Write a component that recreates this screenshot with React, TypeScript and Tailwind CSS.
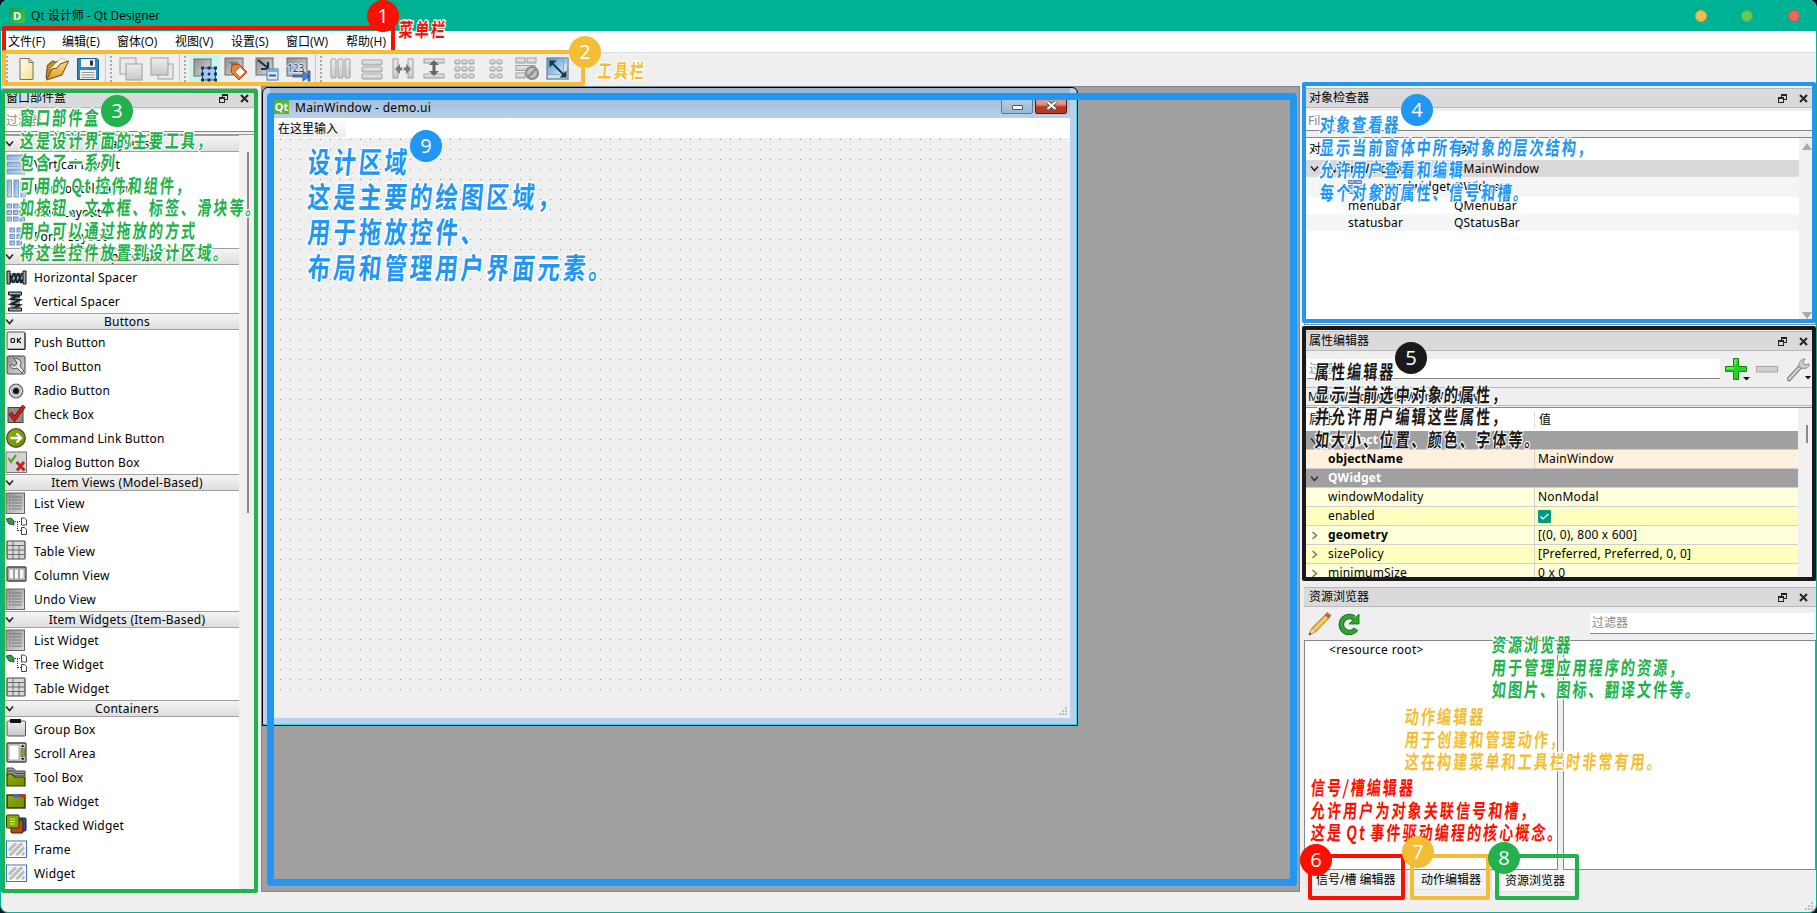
import React from "react";

const UI = "font-['Noto_Sans','Noto_Sans_CJK_SC',sans-serif]";

/* ---------- shared icons ---------- */

function Restore() {
  return (
    <svg width="9" height="9" viewBox="0 0 9 9" fill="none" stroke="#222" shapeRendering="crispEdges">
      <path d="M3 2.5V.5H8.5V5.5H6" strokeWidth="1" />
      <path d="M3 1H9" strokeWidth="1.5" />
      <rect x="0.5" y="3.5" width="5" height="5" />
      <path d="M0 4H6" strokeWidth="1.5" />
    </svg>
  );
}

function Cross() {
  return (
    <svg width="9" height="9" viewBox="0 0 9 9" stroke="#222" strokeWidth="2">
      <path d="M1 1L8 8M8 1L1 8" />
    </svg>
  );
}

function Chevron({ right = false, color = "#222" }: { right?: boolean; color?: string }) {
  return (
    <svg width="9" height="9" viewBox="0 0 9 9" fill="none" stroke={color} strokeWidth="1.5">
      <path d={right ? "M2.5 1L6.5 4.5L2.5 8" : "M1 2.5L4.5 6.5L8 2.5"} />
    </svg>
  );
}

function Grip() {
  return (
    <svg width="8" height="8" viewBox="0 0 8 8" fill="#bdbdbd" shapeRendering="crispEdges">
      <path d="M6 0h2v2h-2zM3 3h2v2h-2zM6 3h2v2h-2zM0 6h2v2h-2zM3 6h2v2h-2zM6 6h2v2h-2z" />
    </svg>
  );
}

/* ---------- toolbar icons ---------- */

function Defs() {
  return (
    <svg width="0" height="0" className="absolute">
      <defs>
        <linearGradient id="gDark" x1="0" y1="0" x2="1" y2="1">
          <stop offset="0" stopColor="#8e8e8e" />
          <stop offset="1" stopColor="#dcdcdc" />
        </linearGradient>
        <linearGradient id="gPale" x1="0" y1="0" x2="0" y2="1">
          <stop offset="0" stopColor="#ededed" />
          <stop offset="1" stopColor="#c9c9c9" />
        </linearGradient>
        <linearGradient id="gBlue" x1="0" y1="0" x2="1" y2="1">
          <stop offset="0" stopColor="#4d94c9" />
          <stop offset="1" stopColor="#d3e8f8" />
        </linearGradient>
        <linearGradient id="gPage" x1="0" y1="0" x2="1" y2="1">
          <stop offset="0" stopColor="#fffef0" />
          <stop offset="1" stopColor="#f8e08a" />
        </linearGradient>
        <linearGradient id="gFolder" x1="0" y1="0" x2="0" y2="1">
          <stop offset="0" stopColor="#fbe08a" />
          <stop offset="1" stopColor="#dc9a1c" />
        </linearGradient>
        <linearGradient id="gGreen" x1="0" y1="0" x2="1" y2="1">
          <stop offset="0" stopColor="#8fae10" />
          <stop offset="1" stopColor="#6f8b00" />
        </linearGradient>
        <linearGradient id="gLayout" x1="0" y1="0" x2="1" y2="1">
          <stop offset="0" stopColor="#6fa3dc" />
          <stop offset="1" stopColor="#d6e6f6" />
        </linearGradient>
      </defs>
    </svg>
  );
}

function T({ children, active = false }: { children: React.ReactNode; active?: boolean }) {
  return (
    <div className={`flex h-[28px] w-[31px] items-center justify-center ${active ? "bg-[#c6f7ee]" : ""}`}>
      <svg width="24" height="24" viewBox="0 0 24 24" className="overflow-visible">
        {children}
      </svg>
    </div>
  );
}

function ToolSep() {
  return (
    <div className="flex h-[30px] w-[12px] items-center gap-[4px] pl-[2px]">
      <div className="h-[30px] w-px bg-[#c9c9c9]" />
      <div className="h-[26px] w-[2px] bg-[repeating-linear-gradient(#a9a9a9_0_2px,transparent_2px_4px)]" />
    </div>
  );
}

const graySq = { fill: "url(#gDark)", stroke: "#6d6d6d" };
const pale = { fill: "url(#gPale)", stroke: "#9f9f9f", strokeWidth: 1 };

function Toolbar() {
  return (
    <div className="flex h-[33px] shrink-0 items-center bg-[#efefef] pb-[2px] pl-[5px]">
      <div className="mr-[2px] h-[26px] w-[2px] bg-[repeating-linear-gradient(#a9a9a9_0_2px,transparent_2px_4px)]" />
      <T>
        <path d="M6 1.5h9l4 4v17H6z" fill="url(#gPage)" stroke="#77735c" />
        <path d="M15 1.5v4h4z" fill="#fff" stroke="#77735c" />
      </T>
      <T>
        <path d="M1 21L2.500 8l5-4 3 1 3-1 4 3v4L9 20z" fill="#c58a19" stroke="#6b4a12" />
        <path d="M5 12L16 1l6 3-9 12z" fill="#fffbe8" stroke="#b9a060" strokeWidth=".6" />
        <path d="M1.500 23L7 12l5-1 3-4 8.500-3L17 18z" fill="url(#gFolder)" stroke="#6b4a12" />
      </T>
      <T>
        <path d="M1.500 1.500H21l1.500 1.500V22.500H1.500z" fill="#2f86c6" stroke="#1a5f94" />
        <path d="M5 2h14v8H5z" fill="#f3f3f3" />
        <path d="M14 3.500h3v5h-3z" fill="#333" />
        <path d="M4 13h16v9H4z" fill="#eee" />
        <path d="M5.500 15.500h13M5.500 18h13M5.500 20.500h13" stroke="#999" />
      </T>
      <ToolSep />
      <T>
        <rect x="1" y="1" width="16" height="16" {...pale} fill="#e9e9e9" />
        <rect x="7" y="7" width="16" height="16" {...pale} />
      </T>
      <T>
        <rect x="8" y="7" width="15" height="15" {...pale} fill="#e9e9e9" />
        <rect x="1" y="1" width="17" height="17" {...pale} />
      </T>
      <ToolSep />
      <T active>
        <rect x="1" y="2" width="17" height="17" {...graySq} />
        <rect x="9.500" y="11" width="13" height="12" fill="#a9cbf3" stroke="#2b4f86" />
        <path d="M8 9.500h3v3H8zM14.500 9.500h3v3h-3zM21 9.500h3v3h-3zM8 15.500h3v3H8zM21 15.500h3v3h-3zM8 21.500h3v3H8zM14.500 21.500h3v3h-3zM21 21.500h3v3h-3z" fill="#16345f" />
        <circle cx="16" cy="17" r="1.500" fill="#16345f" />
      </T>
      <T>
        <rect x="1" y="1" width="18" height="17" {...graySq} />
        <path d="M5 5h8l2 3-3 5z" fill="#444" opacity=".5" />
        <path d="M8 8l7-1 8 8-8 8-8-8z" fill="#ef7d32" stroke="#a84408" />
        <path d="M11 15l5-5 5 5-5 5z" fill="#fff" stroke="#a84408" strokeWidth=".5" />
      </T>
      <T>
        <rect x="1" y="1" width="17" height="17" {...graySq} />
        <path d="M3 3l10 8M13 5v7H6" stroke="#1d3540" strokeWidth="2.200" fill="none" />
        <rect x="12" y="12" width="11" height="11" fill="#dbe9fb" stroke="#3f72b5" />
        <path d="M12 12h11v3H12z" fill="#7facdf" />
        <path d="M14 18.500h7" stroke="#2a5ea6" strokeWidth="2" />
      </T>
      <T>
        <rect x="1" y="1" width="20" height="18" {...graySq} />
        <text x="1" y="15" fontSize="10" fill="#1b3f80" className="font-['Noto_Sans',sans-serif]" stroke="#eee" strokeWidth="1.500" style={{ paintOrder: "stroke" }}>
          123
        </text>
        <path d="M7 18h10v-4l6 5.500-6 4.500v-4H7zM22 14h2v10h-2z" fill="#4d84d1" stroke="#1d4688" strokeWidth=".7" />
      </T>
      <ToolSep />
      <T>
        {[2, 9, 16].map((x) => (
          <rect key={x} x={x} y="2" width="5" height="19" rx="1" {...pale} />
        ))}
      </T>
      <T>
        {[3, 10, 17].map((y) => (
          <rect key={y} x="2" y={y} width="20" height="5" rx="1" {...pale} />
        ))}
      </T>
      <T>
        <rect x="2" y="2" width="5" height="19" {...pale} />
        <rect x="17" y="2" width="5" height="19" {...pale} />
        <path d="M4 12l5-5v3.500h6V7l5 5-5 5v-3.500H9V17z" fill="#777" />
        <path d="M12 5v14" stroke="#eee" strokeWidth="1.500" />
      </T>
      <T>
        <rect x="2" y="2" width="20" height="4" {...pale} />
        <rect x="2" y="17" width="20" height="4" {...pale} />
        <path d="M12 3l5 5h-3.500v6H17l-5 5-5-5h3.500V8H7z" fill="#666" />
      </T>
      <T>
        {[3, 10, 17].map((y) => [2, 9, 16].map((x) => <rect key={`${x}${y}`} x={x} y={y} width="5" height="4" rx="1" {...pale} />))}
      </T>
      <T>
        {[3, 10, 17].map((y) => [6, 13].map((x) => <rect key={`${x}${y}`} x={x} y={y} width="5" height="4" rx="1" {...pale} />))}
      </T>
      <T>
        <rect x="1" y="1" width="9" height="5" {...pale} />
        <rect x="12" y="1" width="9" height="5" {...pale} />
        <rect x="1" y="8.500" width="19" height="5" {...pale} />
        <rect x="1" y="16" width="9" height="5" {...pale} />
        <circle cx="17" cy="16" r="6" fill="#c0c0c0" stroke="#8b8b8b" strokeWidth="2" />
        <path d="M13 20l8-8" stroke="#8b8b8b" strokeWidth="2" />
      </T>
      <T>
        <rect x="1" y="1" width="21" height="21" fill="#d8dde2" stroke="#49667c" />
        <path d="M1.500 1.500h20v5h-20z" fill="#9fc3e0" />
        <path d="M1.500 1.500h16v16h-16z" fill="url(#gBlue)" stroke="#5b87a8" strokeWidth=".6" />
        <path d="M5 5l14 14" stroke="#12384c" strokeWidth="1.800" />
        <path d="M3.500 3.500h7l-7 7zM20.500 20.500h-7l7-7z" fill="#12384c" />
      </T>
    </div>
  );
}

/* ---------- widget box ---------- */

const icons: Record<string, React.ReactNode> = {
  vlay: [1, 8, 15].map((y) => <rect key={y} x="1" y={y} width="18" height="5" fill="url(#gLayout)" stroke="#6f8cae" strokeWidth=".8" />),
  hlay: [1, 8, 15].map((x) => <rect key={x} x={x} y="2" width="4.500" height="17" fill="url(#gLayout)" stroke="#6f8cae" strokeWidth=".8" />),
  grid: [2, 8.500, 15].map((y) => [1, 7.500, 14].map((x) => <rect key={`${x}${y}`} x={x} y={y} width="4.500" height="4" fill="url(#gLayout)" stroke="#6f8cae" strokeWidth=".9" />)),
  form: [2, 8.500, 15].map((y) => [4, 11].map((x) => <rect key={`${x}${y}`} x={x} y={y} width="4.500" height="4" fill="url(#gLayout)" stroke="#6f8cae" strokeWidth=".9" />)),
  hsp: (
    <>
      <path d="M4 6h13v10H4z" fill="#8fa3b0" />
      <path d="M3.500 16L8 6M7.500 16L12 6M11.500 16L16 6M15 16l2-4M4 8l3 8M8.500 6l2.500 10M12.500 6L15 16" fill="none" stroke="#16202a" strokeWidth="1.700" />
      <path d="M1 4h3v13H1zM17 4h3v13h-3z" fill="#9aa" stroke="#111" />
    </>
  ),
  vsp: (
    <>
      <path d="M4.500 4h9.500v13H4.500z" fill="#8fa3b0" />
      <path d="M14 4L5 8l9 1-9 4 9 1-6 3M5 4.500l9 1" fill="none" stroke="#16202a" strokeWidth="1.800" />
      <path d="M2.500 1h13v3h-13zM2.500 17h13v3h-13z" fill="#9aa" stroke="#111" />
    </>
  ),
  push: (
    <>
      <rect x="1" y="0" width="18" height="17" rx="1" fill="#e9e9e9" stroke="#555" />
      <path d="M19 1v16.500H1.500" stroke="#222" fill="none" />
      <rect x="5" y="6.500" width="3.500" height="4" rx="1" fill="none" stroke="#111" strokeWidth="1.100" />
      <path d="M11.500 6v5M15 6l-3 2.500 3 2.500" stroke="#111" strokeWidth="1.100" fill="none" />
    </>
  ),
  tool: (
    <>
      <rect x="1" y="0" width="18" height="18" rx="1" fill="url(#gDark)" stroke="#444" />
      <path d="M8 3c5-2 9 3 6 7l4 5-2 2-5-5c-4 2-8-1-6-4l3 2 3-2-1-3z" fill="#e6e6e6" stroke="#444" strokeWidth=".9" />
    </>
  ),
  radio: (
    <>
      <circle cx="10" cy="11" r="6.800" fill="#e8e8e8" stroke="#666" strokeWidth="1.300" />
      <circle cx="10" cy="11" r="5" fill="#b5b5b5" />
      <circle cx="10" cy="11" r="3" fill="#111" />
    </>
  ),
  check: (
    <>
      <rect x="2" y="3.500" width="15" height="15" fill="#8c8c8c" stroke="#444" />
      <path d="M4 9l4.500 6L18 2" stroke="#6d0000" strokeWidth="4" fill="none" />
      <path d="M4 9l4.500 6L18 2" stroke="#d81c14" strokeWidth="2.600" fill="none" />
    </>
  ),
  cmd: (
    <>
      <circle cx="10" cy="10" r="9.300" fill="url(#gGreen)" stroke="#4e4e35" strokeWidth="1.300" />
      <path d="M4.500 10h10M10.500 5.500l4.500 4.500-4.500 4.500" stroke="#fff" strokeWidth="2.400" fill="none" />
    </>
  ),
  dialog: (
    <>
      <rect x="0" y="0" width="20.500" height="20.500" fill="#d3d3d3" stroke="#777" />
      <path d="M2.500 6l2.500 4 5-7" stroke="#58a72a" strokeWidth="2.200" fill="none" />
      <path d="M10.500 10l8 8.500M18 10l-7 8.500" stroke="#c32020" strokeWidth="2.800" />
    </>
  ),
  list: (
    <>
      <rect x="0" y="0" width="18.500" height="20.500" fill="url(#gDark)" stroke="#666" />
      <path d="M3 4h2M3 7h2M3 10h2M3 13h2M3 16h2M6 4h10M6 7h10M6 10h10M6 13h10M6 16h10" stroke="#707070" strokeWidth=".9" />
    </>
  ),
  tree: (
    <>
      <path d="M0 2l5-1 3 3v4L3 7z" fill="#2f9a45" stroke="#0d4a1a" strokeWidth=".8" />
      <path d="M9 4.500h6M11.500 5v9M12 13.500h3" stroke="#333" strokeDasharray="1 1" />
      <path d="M15.500 1h3l2 2v5h-5zM15.500 10.500h3l2 2v5h-5z" fill="#fff" stroke="#444" />
    </>
  ),
  table: (
    <>
      <rect x="1" y="0" width="18" height="18" rx="1" fill="#d9d9d9" stroke="#444" strokeWidth="1.200" />
      <path d="M1 4.500h18M1 9h18M1 13.500h18M7 0v18M13 4v14" stroke="#6a6a6a" strokeWidth="1" />
    </>
  ),
  column: (
    <>
      <rect x="1" y="2" width="19" height="14" rx="1" fill="#bbb" stroke="#444" strokeWidth="1.300" />
      <path d="M3 4h4.500v10H3zM8.500 4h4v10h-4zM13.500 4H18v10h-4.500z" fill="#f7f7f7" stroke="#777" strokeWidth=".6" />
    </>
  ),
  group: (
    <>
      <rect x="1" y="2" width="18.500" height="15" rx="1" fill="url(#gPale)" stroke="#555" />
      <rect x="4" y="0" width="11" height="4" fill="#111" />
    </>
  ),
  scroll: (
    <>
      <rect x="1" y="0" width="19" height="19" rx="1" fill="#cfcfcf" stroke="#444" strokeWidth="1.300" />
      <path d="M3 2h10v15H3z" fill="#fff" stroke="#777" strokeWidth=".6" />
      <path d="M15 5.500h3.500v8H15z" fill="#86a80c" stroke="#444" strokeWidth=".5" />
      <path d="M15 4h3.500L16.700 1.500zM15 15h3.500l-1.800 2.500z" fill="#111" />
    </>
  ),
  toolbox: (
    <>
      <path d="M1 1h6l3 3h9v5H1z" fill="#999" stroke="#444" />
      <path d="M1 4h6l3 2.500h9" fill="none" stroke="#444" />
      <path d="M1 7h5l3 3h10v9H1z" fill="url(#gGreen)" stroke="#2c3800" strokeWidth="1.200" />
    </>
  ),
  tab: (
    <>
      <rect x="1" y="4" width="18" height="13" fill="url(#gGreen)" stroke="#1d2600" strokeWidth="1.300" />
      <path d="M7 3.500h6v3H7z" fill="#2d6fd1" />
      <path d="M14 3.500h5v3h-5z" fill="#cc2b22" />
    </>
  ),
  stacked: (
    <>
      <rect x="8" y="3" width="12" height="13" rx="1" fill="#1f51a8" stroke="#0d2147" />
      <rect x="5" y="5" width="12" height="13" rx="1" fill="#b8481a" stroke="#4d1a05" />
      <rect x="0.500" y="0" width="12.500" height="13" rx="1" fill="#86a80c" stroke="#2c3800" />
      <path d="M4 4h5M4 6.500h5M4 9h5" stroke="#e8f53c" strokeWidth="1.200" />
    </>
  ),
  frame: (
    <>
      <rect x="0.500" y="2" width="20" height="16.500" fill="#fff" stroke="#3a73c4" />
      <rect x="2.500" y="4" width="16" height="12.500" fill="#ececec" />
      <path d="M2.800 11.500L10 4.300M4 16.200L16 4.200M10.500 16.200l7.800-7.800M16 16.200l2.300-2.300" stroke="#b9b9b9" strokeWidth="2.600" />
    </>
  ),
};

const groups: { title: string; items: [string, string][] }[] = [
  { title: "Layouts", items: [["vlay", "Vertical Layout"], ["hlay", "Horizontal Layout"], ["grid", "Grid Layout"], ["form", "Form Layout"]] },
  { title: "Spacers", items: [["hsp", "Horizontal Spacer"], ["vsp", "Vertical Spacer"]] },
  {
    title: "Buttons",
    items: [["push", "Push Button"], ["tool", "Tool Button"], ["radio", "Radio Button"], ["check", "Check Box"], ["cmd", "Command Link Button"], ["dialog", "Dialog Button Box"]],
  },
  { title: "Item Views (Model-Based)", items: [["list", "List View"], ["tree", "Tree View"], ["table", "Table View"], ["column", "Column View"], ["list", "Undo View"]] },
  { title: "Item Widgets (Item-Based)", items: [["list", "List Widget"], ["tree", "Tree Widget"], ["table", "Table Widget"]] },
  {
    title: "Containers",
    items: [["group", "Group Box"], ["scroll", "Scroll Area"], ["toolbox", "Tool Box"], ["tab", "Tab Widget"], ["stacked", "Stacked Widget"], ["frame", "Frame"], ["frame", "Widget"]],
  },
];

function DockTitle({ children }: { children: React.ReactNode }) {
  return (
    <div className="flex h-[20px] shrink-0 items-center border-y border-[#b9b9b9] bg-[#dadada] pl-[5px] pr-[8px]">
      <span className="grow text-[12px] leading-[18px]">{children}</span>
      <div className="mr-[12px]">
        <Restore />
      </div>
      <Cross />
    </div>
  );
}

function WidgetBox() {
  return (
    <div className="flex h-[806px] w-[256px] shrink-0 flex-col overflow-hidden">
      <div className="mt-[2px]">
        <DockTitle>窗口部件盒</DockTitle>
      </div>
      <div className="mt-[2px] flex h-[22px] shrink-0 items-center border-b border-[#868686] bg-white pl-[5px] text-[12px] text-[#8a8a8a]">过滤器</div>
      <div className="mt-[2px] flex min-h-0 grow border-t border-[#9a9a9a] bg-[#f0f0f0]">
        <div className="w-[238px] overflow-hidden bg-white pl-[4px]">
          {groups.map((g) => (
            <div key={g.title}>
              <div className="flex h-[17px] items-center border-y border-[#a0a0a0] bg-gradient-to-b from-[#f4f4f4] to-[#dedede]">
                <Chevron />
                <span className="grow pl-[1px] text-center text-[12px] leading-[15px] tracking-[0.25px]">{g.title}</span>
              </div>
              {g.items.map(([ic, label]) => (
                <div key={label} className="flex h-[24px] items-center pl-[1px]">
                  <svg width="21" height="21" viewBox="0 0 21 21" className="overflow-visible">
                    {icons[ic]}
                  </svg>
                  <span className="pl-[7px] pt-[2px] text-[12px] leading-[22px] tracking-[0.2px]">{label}</span>
                </div>
              ))}
            </div>
          ))}
        </div>
        <div className="pl-[8px] pt-[17px]">
          <div className="h-[361px] w-[2px] bg-[#8b8b8b]" />
        </div>
      </div>
    </div>
  );
}

/* ---------- form being designed ---------- */

function MdiArea() {
  return (
    <div className="h-[806px] w-[1039px] shrink-0 border border-[#85878c] bg-[#a0a0a0]">
      <div className="flex h-[639px] w-[816px] flex-col rounded-t-[6px] border border-black bg-[#b9d1ea] pl-[7px] shadow-[inset_-1px_-1px_0_#35cfe8]">
        <div className="mr-[7px] flex h-[30px] shrink-0 items-end bg-gradient-to-b from-[#98b4d2] to-[#b9d1ea]">
          <div className="mb-[4px] ml-[4px] flex h-[15px] w-[15px] items-center justify-center bg-[#5fb234] font-['Noto_Sans',sans-serif] text-[11px] font-bold leading-none text-white">
            Qt
          </div>
          <span className="mb-[2px] ml-[6px] grow text-[12px] leading-[16px] tracking-[0.3px]">MainWindow - demo.ui</span>
          <div className="mb-[4px] mr-[2px] flex h-[17px] w-[32px] items-center justify-center rounded-b-[2px] border border-[#62788f] bg-gradient-to-b from-[#b8cde3] to-[#9bb8d6]">
            <div className="mt-[3px] h-[5px] w-[11px] rounded-[1px] border border-[#555] bg-white" />
          </div>
          <div className="mb-[4px] mr-[3px] flex h-[17px] w-[32px] items-center justify-center rounded-b-[2px] border border-[#5d1414] bg-gradient-to-b from-[#dc9a8c] from-40% to-[#b63a22] to-60%">
            <svg width="11" height="9" viewBox="0 0 11 9">
              <path d="M1.500 1l8 7M9.500 1l-8 7" stroke="#4a5560" strokeWidth="4" />
              <path d="M1.500 1l8 7M9.500 1l-8 7" stroke="#fff" strokeWidth="2.200" />
            </svg>
          </div>
        </div>
        <div className="mr-[7px] flex h-[20px] shrink-0 items-center bg-white">
          <div className="flex h-[18px] items-center bg-gradient-to-b from-white to-[#ececec] pl-[8px] pr-[8px] pt-[2px] text-[12px]">在这里输入</div>
        </div>
        <div className="mr-[7px] h-[560px] shrink-0 bg-[#efefef] bg-[radial-gradient(circle_at_0.5px_1.5px,#909090_0.6px,transparent_0.7px)] bg-[size:10px_10px]" />
        <div className="mr-[7px] flex h-[20px] shrink-0 items-end justify-end bg-[#efefef] pb-[3px] pr-[3px]">
          <Grip />
        </div>
      </div>
    </div>
  );
}

/* ---------- right docks ---------- */

function ObjectInspector() {
  const row = "flex items-center text-[12px] tracking-[0.2px] leading-[16px]";
  return (
    <div className="flex h-[237px] shrink-0 flex-col">
      <DockTitle>对象检查器</DockTitle>
      <div className="mt-[3px] flex h-[20px] shrink-0 items-center border-b border-[#868686] bg-white pl-[4px] text-[12px] text-[#8a8a8a]">Filter</div>
      <div className="mt-[6px] flex grow border border-[#828790] bg-[#f0f0f0]">
        <div className="w-[494px] bg-white">
          <div className={`${row} h-[22px]`}>
            <span className="w-[146px] border-r border-[#e5e5e5] pl-[4px]">对象</span>
            <span className="pl-[9px]">类</span>
          </div>
          <div className={`${row} h-[17px] rounded-[2px] bg-[#d9d9d9] pl-[5px]`}>
            <Chevron />
            <span className="w-[135px] pl-[10px]">MainWindow</span>
            <span>QMainWindow</span>
          </div>
          <div className={`${row} h-[20px] bg-[#f5f5f5] pl-[43px]`}>
            <svg width="14" height="14" viewBox="0 0 14 14">
              <path d="M.5.500h6v3h-6zM7.500.500h6v3h-6zM.5 5.500h13v3H.5zM.5 10.500h6v3h-6z" fill="#9cc0e8" stroke="#5f7fa5" />
              <circle cx="10.500" cy="10" r="3" fill="#ddd" stroke="#999" />
            </svg>
            <span className="w-[92px] pl-[9px]">centralwidget</span>
            <span>QWidget</span>
          </div>
          <div className={`${row} h-[17px] pl-[43px]`}>
            <span className="w-[106px]">menubar</span>
            <span>QMenuBar</span>
          </div>
          <div className={`${row} h-[17px] bg-[#f5f5f5] pl-[43px]`}>
            <span className="w-[106px]">statusbar</span>
            <span>QStatusBar</span>
          </div>
        </div>
        <div className="flex flex-col justify-between pb-[5px] pl-[3px] pt-[5px]">
          <svg width="10" height="7" viewBox="0 0 10 7">
            <path d="M5 0L10 7H0z" fill="#a9a9a9" />
          </svg>
          <svg width="10" height="7" viewBox="0 0 10 7">
            <path d="M5 7L10 0H0z" fill="#a9a9a9" />
          </svg>
        </div>
      </div>
    </div>
  );
}

type Prop = { name: string; value?: React.ReactNode; bg: string; kind?: "head" | "bold" | "sub" | "boldsub" };

const props: Prop[] = [
  { name: "QObject", bg: "bg-[#a0a0a0]", kind: "head" },
  { name: "objectName", value: "MainWindow", bg: "bg-[#ffefdd]", kind: "bold" },
  { name: "QWidget", bg: "bg-[#a0a0a0]", kind: "head" },
  { name: "windowModality", value: "NonModal", bg: "bg-[#ffffdc]" },
  {
    name: "enabled",
    value: (
      <span className="flex h-[13px] w-[13px] items-center justify-center rounded-[1px] bg-[#009c80]">
        <svg width="9" height="7" viewBox="0 0 9 7" fill="none" stroke="#fff" strokeWidth="1.200">
          <path d="M.5 3.500L3 6l5.500-5" />
        </svg>
      </span>
    ),
    bg: "bg-[#ffffbf]",
  },
  { name: "geometry", value: "[(0, 0), 800 x 600]", bg: "bg-[#ffffdc]", kind: "boldsub" },
  { name: "sizePolicy", value: "[Preferred, Preferred, 0, 0]", bg: "bg-[#ffffbf]", kind: "sub" },
  { name: "minimumSize", value: "0 x 0", bg: "bg-[#ffffdc]", kind: "sub" },
];

function PropertyEditor() {
  return (
    <div className="flex h-[250px] shrink-0 flex-col overflow-hidden">
      <DockTitle>属性编辑器</DockTitle>
      <div className="flex h-[36px] shrink-0 items-center pl-[3px]">
        <div className="flex h-[20px] w-[413px] items-center border-b border-[#868686] bg-white pl-[2px] text-[12px] text-[#8a8a8a]">过滤器</div>
        <div className="ml-[5px] flex w-[31px]">
          <svg width="26" height="24" viewBox="0 0 26 24">
            <path d="M8.500 1.500h5v8h8v5h-8v8h-5v-8H.5v-5h8z" fill="#25d41c" stroke="#0d8a0a" />
            <path d="M10 8V3h2M2 12v-1h7" stroke="#a5f79c" fill="none" />
            <path d="M18 20h7l-3.500 3.500z" fill="#111" />
          </svg>
        </div>
        <svg width="22" height="7" viewBox="0 0 22 7">
          <rect x=".5" y=".5" width="21" height="5.500" fill="#d0d0d0" stroke="#a6a6a6" />
        </svg>
        <svg width="26" height="26" viewBox="0 0 26 26" className="ml-[9px]">
          <path d="M2 23L14 10" stroke="#777" strokeWidth="4.500" strokeLinecap="round" />
          <path d="M2 23L14 10" stroke="#d5d5d5" strokeWidth="2.500" strokeLinecap="round" />
          <path d="M12 11c-1-4 2-8 6-8l-2 3 2 3 4-1c1 4-5 6-10 3z" fill="#ccc" stroke="#777" strokeWidth=".8" />
          <path d="M18 20h6l-3 3.500z" fill="#111" />
        </svg>
      </div>
      <div className="flex h-[19px] shrink-0 items-center border-y border-[#b9b9b9] pl-[4px] text-[12px] tracking-[0.2px]">MainWindow : QMainWindow</div>
      <div className="mt-px flex min-h-0 grow border border-b-0 border-[#828790] bg-[#f0f0f0]">
        <div className="w-[493px] shrink-0 overflow-hidden bg-white text-[12px] tracking-[0.2px]">
          <div className="flex h-[23px] items-center">
            <span className="w-[230px] border-r border-[#e0e0e0] pl-[4px]">属性</span>
            <span className="pl-[4px]">值</span>
          </div>
          {props.map((p) => (
            <div key={p.name} className={`flex h-[19px] items-center border-b border-[#cfcfcf] leading-[18px] ${p.bg}`}>
              <span className="flex w-[23px] justify-start pl-[5px]">
                {p.kind === "head" && <Chevron color="#333" />}
                {(p.kind === "sub" || p.kind === "boldsub") && <Chevron right color="#777" />}
              </span>
              <span
                className={`h-[18px] w-[207px] ${p.kind === "head" ? "font-bold text-white" : "border-r border-[#cfcfcf]"} ${
                  p.kind === "bold" || p.kind === "boldsub" ? "font-bold" : ""
                }`}
              >
                {p.name}
              </span>
              <span className="pl-[3px]">{p.value}</span>
            </div>
          ))}
        </div>
        <div className="pl-[8px] pt-[17px]">
          <div className="h-[18px] w-[2px] bg-[#8b8b8b]" />
        </div>
      </div>
    </div>
  );
}

function ResourceBrowser() {
  return (
    <div className="flex flex-col">
      <DockTitle>资源浏览器</DockTitle>
      <div className="flex h-[33px] items-center pl-[4px]">
        <svg width="24" height="24" viewBox="0 0 24 24">
          <path d="M1 23L4 16 17 3l4 3L7.500 20z" fill="#f0b440" stroke="#a46a12" strokeWidth=".8" />
          <path d="M6 18L19 5" stroke="#fbdc8c" strokeWidth="1.500" />
          <path d="M17 3l2-2.500 4 3L21 6z" fill="#cf6a4a" stroke="#8d4a2a" strokeWidth=".6" />
          <path d="M1 23l3-7 3.500 4z" fill="#f3deb8" stroke="#a46a12" strokeWidth=".4" />
          <path d="M1 23l1-2.500 1.300 1.300z" fill="#222" />
        </svg>
        <svg width="22" height="22" viewBox="0 0 22 22" className="ml-[6px]">
          <path d="M18 16A8 8 0 1 1 16 5" fill="none" stroke="#136b1b" strokeWidth="5.500" />
          <path d="M18 16A8 8 0 1 1 16 5" fill="none" stroke="#2fa337" strokeWidth="3.800" />
          <path d="M21 1v10H11z" fill="#2fa337" stroke="#136b1b" strokeWidth=".8" />
        </svg>
        <div className="ml-auto mr-[2px] flex h-[21px] w-[224px] items-center border-b border-[#868686] bg-white pl-[2px] text-[12px] text-[#8a8a8a]">过滤器</div>
      </div>
      <div className="flex h-[230px] justify-between">
        <div className="w-[254px] border border-[#828790] bg-white pl-[24px] text-[12px] leading-[17px] tracking-[0.35px]">&lt;resource root&gt;</div>
        <div className="w-[253px] border border-[#828790] bg-white" />
      </div>
      <div className="flex text-[12px] leading-[20px]">
        <div className="ml-[2px] h-[20px] w-[101px] border border-t-0 border-[#e2e2e2] bg-[#f3f3f3] pl-[9px]">信号/槽 编辑器</div>
        <div className="h-[20px] w-[84px] border border-t-0 border-[#e2e2e2] bg-[#f3f3f3] pl-[13px]">动作编辑器</div>
        <div className="h-[22px] w-[84px] border border-t-0 border-[#e2e2e2] bg-[#f9f9f9] pl-[13px] pt-px">资源浏览器</div>
      </div>
    </div>
  );
}

/* ---------- annotations drawn over the window ---------- */

function Box({ className }: { className: string }) {
  return <div className={`absolute rounded-[2px] ${className}`} />;
}

function Badge({ n, className }: { n: number; className: string }) {
  return (
    <div className={`absolute flex h-[32px] w-[32px] items-center justify-center rounded-full font-['Open_Sans',sans-serif] text-[20px] leading-none text-white ${className}`}>
      {n}
    </div>
  );
}

function Note({ lines, className, big = false }: { lines: string[]; className: string; big?: boolean }) {
  return (
    <div
      className={`absolute origin-top-left whitespace-pre font-['Noto_Sans_CJK_SC',sans-serif] font-bold [paint-order:stroke] ${
        big
          ? "[transform:scaleX(0.76)] text-[29.5px] leading-[35.2px] tracking-[4.1px] [-webkit-text-stroke:3px_#fff]"
          : "[transform:scaleX(0.72)] text-[19.5px] leading-[22.5px] tracking-[2.9px] [word-spacing:-3px] [-webkit-text-stroke:2.5px_#fff]"
      } ${className}`}
    >
      {lines.map((l) => (
        <div key={l} className="[transform:skewX(-7deg)]">
          {l}
        </div>
      ))}
    </div>
  );
}

function Annotations() {
  return (
    <div className="pointer-events-none absolute inset-0">
      <Box className="left-[2px] top-[26px] h-[28px] w-[393px] border-4 border-[#fd0f00]" />
      <Box className="left-[2px] top-[50px] h-[36px] w-[583px] border-4 border-[#f3be35]" />
      <Box className="left-[1px] top-[89px] h-[804px] w-[257px] border-4 border-[#22b14c]" />
      <Box className="left-[1302px] top-[82px] h-[241px] w-[514px] border-4 border-[#2196f3]" />
      <Box className="left-[1302px] top-[326px] h-[255px] w-[514px] border-4 border-[#1a1a1a]" />
      <Box className="left-[1308px] top-[854px] h-[46px] w-[97px] border-4 border-[#fd0f00]" />
      <Box className="left-[1410px] top-[854px] h-[46px] w-[80px] border-4 border-[#f3be35]" />
      <Box className="left-[1495px] top-[854px] h-[46px] w-[84px] border-4 border-[#22b14c]" />
      <Box className="left-[267px] top-[93px] h-[793px] w-[1030px] rounded-[4px] border-[7px] border-[#2196f3]" />

      <Note className="left-[399px] top-[18px] text-[#fd0f00]" lines={["菜单栏"]} />
      <Note className="left-[598px] top-[59px] text-[#f3be35]" lines={["工具栏"]} />
      <Note
        className="left-[20px] top-[106px] text-[#22b14c]"
        lines={["窗口部件盒", "这是设计界面的主要工具，", "包含了一系列", "可用的 Qt 控件和组件，", "如按钮、文本框、标签、滑块等。", "用户可以通过拖放的方式", "将这些控件放置到设计区域。"]}
      />
      <Note className="left-[1320px] top-[113px] text-[#2196f3]" lines={["对象查看器", "显示当前窗体中所有对象的层次结构，", "允许用户查看和编辑", "每个对象的属性、信号和槽。"]} />
      <Note className="left-[1315px] top-[360px] text-[#1a1a1a]" lines={["属性编辑器", "显示当前选中对象的属性，", "并允许用户编辑这些属性，", "如大小、位置、颜色、字体等。"]} />
      <Note className="left-[1492px] top-[633px] text-[#22b14c]" lines={["资源浏览器", "用于管理应用程序的资源，", "如图片、图标、翻译文件等。"]} />
      <Note className="left-[1405px] top-[705px] text-[#f3be35]" lines={["动作编辑器", "用于创建和管理动作，", "这在构建菜单和工具栏时非常有用。"]} />
      <Note className="left-[1311px] top-[776px] text-[#fd0f00]" lines={["信号/槽编辑器", "允许用户为对象关联信号和槽，", "这是 Qt 事件驱动编程的核心概念。"]} />
      <Note big className="left-[308px] top-[143px] text-[#2196f3]" lines={["设计区域", "这是主要的绘图区域，", "用于拖放控件、", "布局和管理用户界面元素。"]} />

      <Badge n={1} className="left-[367px] top-0 bg-[#fd0f00]" />
      <Badge n={2} className="left-[569px] top-[36px] bg-[#f3be35]" />
      <Badge n={3} className="left-[101px] top-[95px] bg-[#22b14c]" />
      <Badge n={4} className="left-[1401px] top-[94px] bg-[#2196f3]" />
      <Badge n={5} className="left-[1395px] top-[342px] bg-[#1a1a1a]" />
      <Badge n={6} className="left-[1300px] top-[844px] bg-[#fd0f00]" />
      <Badge n={7} className="left-[1402px] top-[836px] bg-[#f3be35]" />
      <Badge n={8} className="left-[1488px] top-[842px] bg-[#22b14c]" />
      <Badge n={9} className="left-[410px] top-[130px] bg-[#2196f3]" />
    </div>
  );
}

/* ---------- window ---------- */

const menus: [string, string][] = [
  ["文件(F)", "w-[54px]"],
  ["编辑(E)", "w-[55px]"],
  ["窗体(O)", "w-[58px]"],
  ["视图(V)", "w-[56px]"],
  ["设置(S)", "w-[55px]"],
  ["窗口(W)", "w-[60px]"],
  ["帮助(H)", "w-[50px]"],
];

export default function App() {
  return (
    <div className={`relative h-[913px] w-[1817px] overflow-hidden bg-[#031322] text-black ${UI}`}>
      <Defs />
      <div className="flex h-[913px] flex-col overflow-hidden rounded-[8px] border border-t-0 border-[#00b294] bg-[#efefef]">
        <div className="flex h-[31px] shrink-0 items-center bg-[#00b294] pl-[8px]">
          <div className="flex h-[15px] w-[16px] items-center justify-center rounded-[2px] bg-gradient-to-br from-[#1c9a3f] to-[#3fc756] text-[11px] font-bold leading-none text-white">D</div>
          <span className="ml-[6px] grow font-['Open_Sans','Noto_Sans_CJK_SC',sans-serif] text-[12px]">Qt 设计师 - Qt Designer</span>
          <div className="mr-[34px] h-[12px] w-[12px] rounded-full border border-[#d9a238] bg-[#f3bd4e]" />
          <div className="mr-[35px] h-[12px] w-[12px] rounded-full border border-[#4fb443] bg-[#64ca56]" />
          <div className="mr-[16px] h-[12px] w-[12px] rounded-full border border-[#d4534a] bg-[#eb6a5e]" />
        </div>
        <div className="flex h-[22px] shrink-0 items-center border-b border-[#dfdfdf] bg-white pl-[7px] font-['Open_Sans','Noto_Sans_CJK_SC',sans-serif] text-[12px]">
          {menus.map(([m, w]) => (
            <span key={m} className={`shrink-0 ${w}`}>
              {m}
            </span>
          ))}
        </div>
        <Toolbar />
        <div className="flex">
          <WidgetBox />
          <div className="w-[4px]" />
          <MdiArea />
          <div className="ml-[4px] flex grow flex-col">
            <div className="h-[2px] shrink-0" />
            <ObjectInspector />
            <div className="h-[6px] shrink-0" />
            <PropertyEditor />
            <div className="h-[6px] shrink-0" />
            <ResourceBrowser />
          </div>
        </div>
        <div className="mt-auto flex justify-end pb-[2px] pr-[3px]">
          <Grip />
        </div>
      </div>
      <Annotations />
    </div>
  );
}
